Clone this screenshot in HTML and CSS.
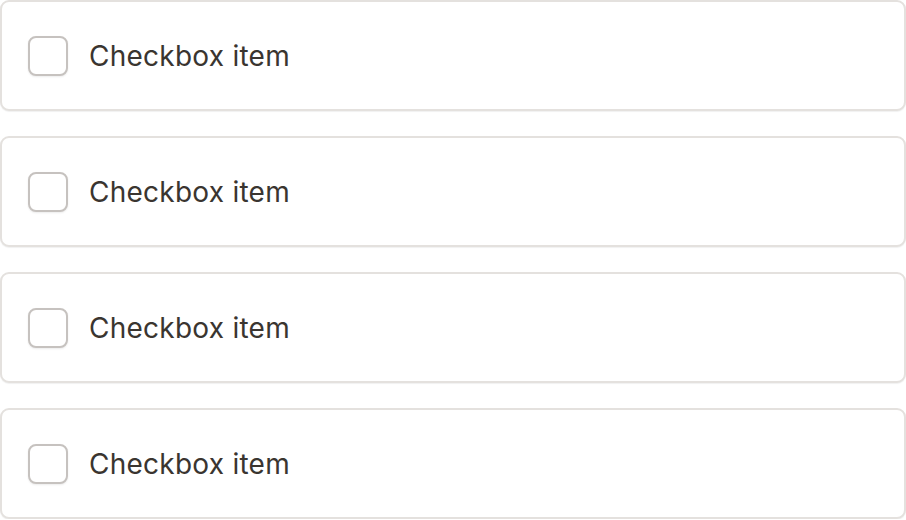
FILE: index.html
```html
<!DOCTYPE html>
<html>
	<head>
		<meta charset="UTF-8">
		<title>Checkbox list</title>
		<link rel="stylesheet" href="styles.css">
	</head>
	<body>
		<div class="list">
			<label class="item">
				<span class="box"></span>
				<span class="text">Checkbox item</span>
			</label>
			<label class="item">
				<span class="box"></span>
				<span class="text">Checkbox item</span>
			</label>
			<label class="item">
				<span class="box"></span>
				<span class="text">Checkbox item</span>
			</label>
			<label class="item">
				<span class="box"></span>
				<span class="text">Checkbox item</span>
			</label>
		</div>
	</body>
</html>
```

FILE: styles.css
```css
body{
	margin:0;
	background-color:#fff;
	font-family:Inter, "Noto Sans", sans-serif;
}
.list{
	display:flex;
	flex-direction:column;
	gap:25px;
}
.item{
	display:flex;
	align-items:center;
	gap:21px;
	height:111px;
	box-sizing:border-box;
	padding:1px 0 0 26px;
	border:2px solid #e4e1de;
	border-radius:9px;
	box-shadow:0 1px 1px rgba(0,0,0,0.06);
	background-color:#fff;
}
.box{
	width:40px;
	height:40px;
	box-sizing:border-box;
	border:2px solid #c6c2bf;
	border-radius:8px;
	box-shadow:0 1px 2px rgba(0,0,0,0.08);
	background-color:#fff;
}
.text{
	font-size:28px;
	color:#3a3530;
	letter-spacing:0.25px;
}
```
